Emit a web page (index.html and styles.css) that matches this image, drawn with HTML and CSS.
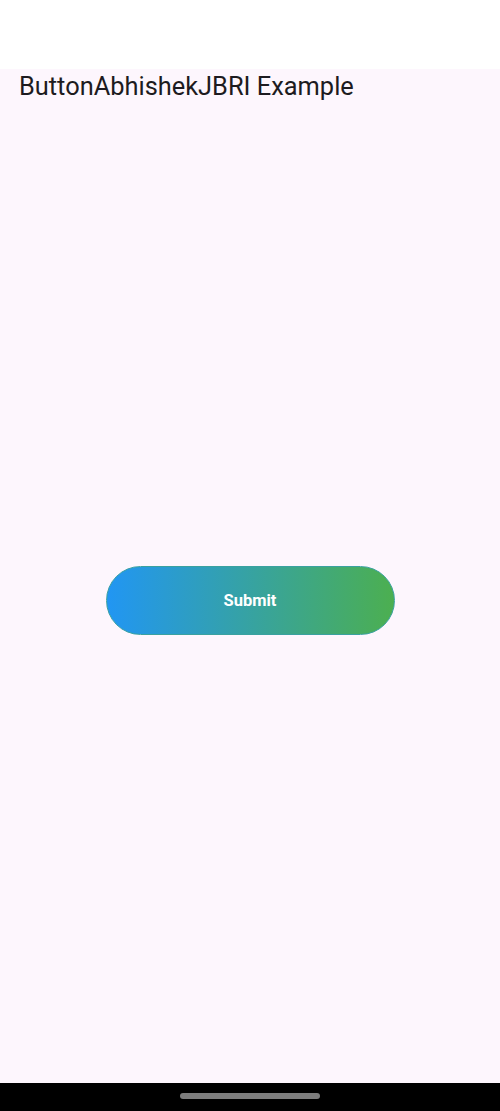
FILE: index.html
```html
<!DOCTYPE html>
<html>
<head>
<meta charset="utf-8">
<link rel="stylesheet" href="styles.css">
</head>
<body>
<div class="status"></div>
<main class="screen">
  <h1 class="title">ButtonAbhishekJBRI Example</h1>
  <div class="center">
    <button class="grad-btn">Submit</button>
  </div>
</main>
<div class="navbar"><div class="handle"></div></div>
</body>
</html>
```
FILE: styles.css
```css
html, body {
  margin: 0;
  padding: 0;
  height: 1111px;
  overflow: hidden;
}
body {
  display: flex;
  flex-direction: column;
  font-family: Roboto, "Noto Sans", sans-serif;
  background: #fdf6fd;
}
.status {
  height: 69px;
  background: #ffffff;
  flex: none;
}
.screen {
  flex: 1;
  display: flex;
  flex-direction: column;
  background: #fdf6fd;
}
.title {
  margin: 0;
  padding: 2px 0 0 19px;
  font-size: 25.4px;
  font-weight: 400;
  line-height: 30px;
  color: #1d1b20;
}
.center {
  flex: 1;
  display: flex;
  align-items: center;
  justify-content: center;
  padding-top: 16px;
}
.grad-btn {
  width: 289px;
  height: 69px;
  border: 1px solid #3aa1a0;
  border-radius: 35px;
  background: linear-gradient(to right, #2196f3, #4caf50);
  color: #ffffff;
  font-family: Roboto, "Noto Sans", sans-serif;
  font-weight: 700;
  font-size: 16.5px;
  cursor: pointer;
}
.navbar {
  height: 28px;
  flex: none;
  background: #000000;
  display: flex;
  justify-content: center;
  padding-top: 10px;
  box-sizing: border-box;
}
.handle {
  width: 140px;
  height: 6px;
  border-radius: 3px;
  background: #7d7d7d;
}
```
